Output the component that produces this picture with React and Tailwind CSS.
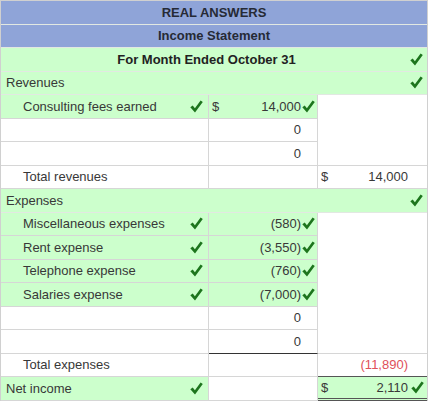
import React from "react";

const Check = ({ className = "" }) => (
  <svg width="13" height="13" viewBox="0 0 13 13" className={className}>
    <polygon points="0.3,7.3 2.7,5.4 4.9,8.2 10.6,0.4 12.8,2 5,12.6" fill="#1d751d" />
  </svg>
);

const G = "bg-[#ccffcc]";
const W = "bg-white";
const B = "bg-[#8fa4d8]";

function Row({ children }) {
  return <div className="flex h-[23.5px]">{children}</div>;
}

function Full({ bg, children, className = "" }) {
  return (
    <div className={`flex-1 flex items-center border-b border-[#e2e8e2] ${bg} ${className}`}>{children}</div>
  );
}

function C1({ bg, text, check, indent = true, noBorder }) {
  return (
    <div
      className={`w-[208px] shrink-0 flex items-center justify-between border-r ${noBorder ? "" : "border-b"} border-[#d6d6d6] ${bg} ${indent ? "pl-[22px]" : "pl-[5px]"} pr-[5px]`}
    >
      <span>{text}</span>
      {check && <Check />}
    </div>
  );
}

function C2({ bg, dollar, value, check, className = "" }) {
  return (
    <div
      className={`w-[109px] shrink-0 flex items-center border-r border-b border-[#d6d6d6] ${bg} pl-[3px] pr-[2px] ${className}`}
    >
      <span className="w-[10px]">{dollar ? "$" : ""}</span>
      <span className="flex-1 text-right">{value}</span>
      <span className="w-[14px] flex justify-end">{check && <Check />}</span>
    </div>
  );
}

function C3({ bg = W, dollar, value, check, border = true, className = "", valueClass = "" }) {
  return (
    <div
      className={`flex-1 flex items-center ${border ? "border-b border-[#d6d6d6]" : ""} ${bg} pl-[3px] pr-[3px] ${className}`}
    >
      <span className="w-[10px]">{dollar ? "$" : ""}</span>
      <span className={`flex-1 text-right ${valueClass}`}>{value}</span>
      <span className="w-[16px] flex justify-end">{check && <Check />}</span>
    </div>
  );
}

export default function App() {
  return (
    <div
      className="w-[428px] h-[405px] bg-white text-[13px] text-[#383838] leading-none"
      style={{ fontFamily: '"Liberation Sans", Arial, sans-serif' }}
    >
      <div className="w-[428px] border-t border-l border-r border-[#d0d0d0]">
        <Row>
          <Full bg={B} className="justify-center font-bold text-[#262a35] border-[#c9d2ea]">REAL ANSWERS</Full>
        </Row>
        <Row>
          <Full bg={B} className="justify-center font-bold text-[#262a35] border-[#c9d2ea]">Income Statement</Full>
        </Row>
        <Row>
          <Full bg={G} className="relative justify-center font-bold text-[#222]">
            <span className="pr-[15px]">For Month Ended October 31</span>
            <span className="absolute right-[4px] top-[5px]"><Check /></span>
          </Full>
        </Row>
        <Row>
          <Full bg={G} className="justify-between pl-[5px] pr-[4px]">
            <span>Revenues</span>
            <Check />
          </Full>
        </Row>
        <Row>
          <C1 bg={G} text="Consulting fees earned" check />
          <C2 bg={G} dollar value="14,000" check />
          <C3 border={false} />
        </Row>
        <Row>
          <C1 bg={W} text="" />
          <C2 bg={W} value="0" />
          <C3 border={false} />
        </Row>
        <Row>
          <C1 bg={W} text="" />
          <C2 bg={W} value="0" />
          <C3 />
        </Row>
        <Row>
          <C1 bg={W} text="Total revenues" />
          <C2 bg={W} value="" />
          <C3 dollar value="14,000" />
        </Row>
        <Row>
          <Full bg={G} className="justify-between pl-[5px] pr-[4px]">
            <span>Expenses</span>
            <Check />
          </Full>
        </Row>
        <Row>
          <C1 bg={G} text="Miscellaneous expenses" check />
          <C2 bg={G} value="(580)" check />
          <C3 border={false} />
        </Row>
        <Row>
          <C1 bg={G} text="Rent expense" check />
          <C2 bg={G} value="(3,550)" check />
          <C3 border={false} />
        </Row>
        <Row>
          <C1 bg={G} text="Telephone expense" check />
          <C2 bg={G} value="(760)" check />
          <C3 border={false} />
        </Row>
        <Row>
          <C1 bg={G} text="Salaries expense" check />
          <C2 bg={G} value="(7,000)" check />
          <C3 border={false} />
        </Row>
        <Row>
          <C1 bg={W} text="" />
          <C2 bg={W} value="0" />
          <C3 border={false} />
        </Row>
        <Row>
          <C1 bg={W} text="" />
          <C2 bg={W} value="0" className="!border-b-[#333]" />
          <C3 />
        </Row>
        <Row>
          <C1 bg={W} text="Total expenses" />
          <C2 bg={W} value="" />
          <C3 value="(11,890)" valueClass="text-[#e0505a]" className="!border-b-[#555]" />
        </Row>
        <Row>
          <C1 bg={G} text="Net income" indent={false} check />
          <C2 bg={W} value="" />
          <C3 bg={G} dollar value="2,110" check border={false} className="border-b-[3px] border-double border-[#555]" />
        </Row>
      </div>
    </div>
  );
}
